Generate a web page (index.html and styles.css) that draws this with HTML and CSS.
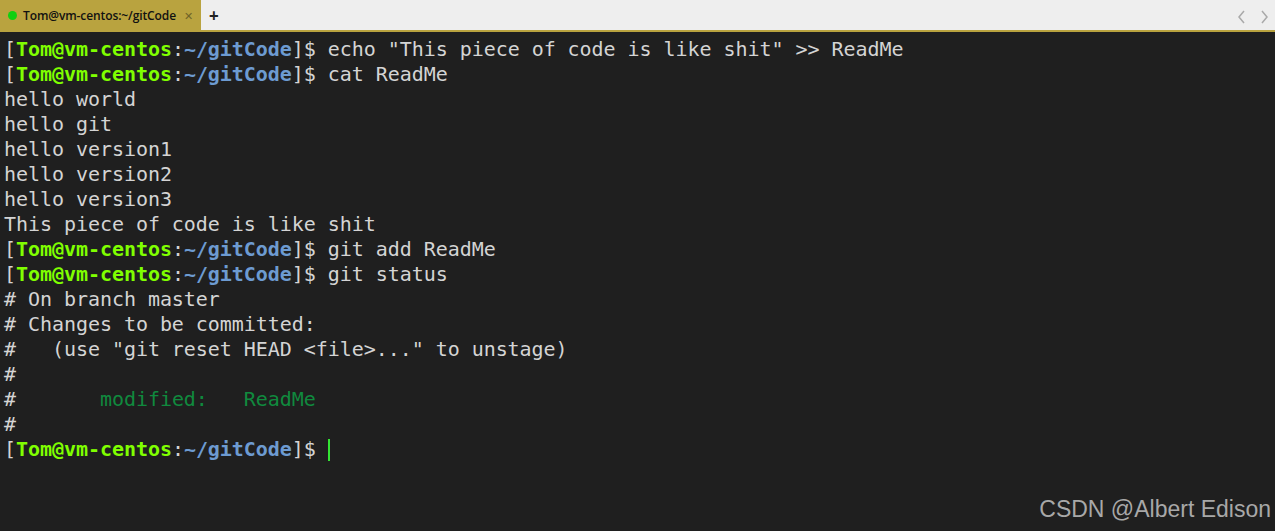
FILE: index.html
```html
<!DOCTYPE html>
<html>
<head>
<meta charset="utf-8">
<link rel="stylesheet" href="styles.css">
</head>
<body>
<div class="tabbar">
  <div class="tab">
    <span class="dot"></span>
    <span class="tab-title">Tom@vm-centos:~/gitCode</span>
    <span class="tab-close">✕</span>
  </div>
  <div class="tab-add">+</div>
  <div class="spacer"></div>
  <div class="nav">
    <svg width="10" height="14" viewBox="0 0 10 14"><path d="M7 1 L2 7 L7 13" fill="none" stroke="#a9a9a9" stroke-width="1.5"/></svg>
    <svg width="10" height="14" viewBox="0 0 10 14"><path d="M3 1 L8 7 L3 13" fill="none" stroke="#a9a9a9" stroke-width="1.5"/></svg>
  </div>
</div>
<div class="term">
<div class="line"><span class="br">[</span><span class="user">Tom@vm-centos</span><span class="br">:</span><span class="path">~/gitCode</span><span class="br">]$ </span>echo "This piece of code is like shit" &gt;&gt; ReadMe</div>
<div class="line"><span class="br">[</span><span class="user">Tom@vm-centos</span><span class="br">:</span><span class="path">~/gitCode</span><span class="br">]$ </span>cat ReadMe</div>
<div class="line">hello world</div>
<div class="line">hello git</div>
<div class="line">hello version1</div>
<div class="line">hello version2</div>
<div class="line">hello version3</div>
<div class="line">This piece of code is like shit</div>
<div class="line"><span class="br">[</span><span class="user">Tom@vm-centos</span><span class="br">:</span><span class="path">~/gitCode</span><span class="br">]$ </span>git add ReadMe</div>
<div class="line"><span class="br">[</span><span class="user">Tom@vm-centos</span><span class="br">:</span><span class="path">~/gitCode</span><span class="br">]$ </span>git status</div>
<div class="line"># On branch master</div>
<div class="line"># Changes to be committed:</div>
<div class="line">#   (use "git reset HEAD &lt;file&gt;..." to unstage)</div>
<div class="line">#</div>
<div class="line">#       <span class="mod">modified:   ReadMe</span></div>
<div class="line">#</div>
<div class="line"><span class="br">[</span><span class="user">Tom@vm-centos</span><span class="br">:</span><span class="path">~/gitCode</span><span class="br">]$ </span><span class="cursor"></span></div>
</div>
<div class="watermark">CSDN @Albert Edison</div>
</body>
</html>
```
FILE: styles.css
```css
html, body {
  margin: 0;
  padding: 0;
  background: #1f1f1f;
  height: 100%;
  overflow: hidden;
}
body {
  position: relative;
}
.tabbar {
  display: flex;
  align-items: stretch;
  height: 30px;
  background: #eeeeee;
  border-bottom: 2px solid #b9a33f;
  font-family: "Open Sans", "Liberation Sans", sans-serif;
}
.tab {
  display: flex;
  align-items: center;
  width: 201px;
  box-sizing: border-box;
  background: #b9a33f;
  padding-left: 8px;
}
.dot {
  width: 9px;
  height: 9px;
  border-radius: 50%;
  background: #10d010;
  margin-right: 6px;
}
.tab-title {
  font-size: 12px;
  font-weight: 600;
  color: #111;
  letter-spacing: -0.1px;
}
.tab-close {
  font-size: 11px;
  color: #6f6428;
  margin-left: 8px;
}
.tab-add {
  display: flex;
  align-items: center;
  padding-left: 8px;
  font-size: 17px;
  font-weight: 700;
  color: #222;
}
.spacer { flex: 1; }
.nav {
  display: flex;
  align-items: center;
  gap: 12px;
  padding-right: 6px;
  padding-top: 3px;
}
.term {
  padding: 5px 0 0 4px;
  font-family: "DejaVu Sans Mono", "Liberation Mono", monospace;
  font-size: 20px;
  letter-spacing: -0.05px;
  line-height: 25px;
  color: #d4d4d4;
}
.line { height: 25px; white-space: pre; }
.br { color: #d4d4d4; font-weight: normal; }
.user { color: #80ff00; font-weight: bold; }
.path { color: #6d9bd1; font-weight: bold; }
.mod { color: #108a3e; }
.cursor {
  display: inline-block;
  width: 2px;
  height: 22px;
  background: #33e433;
  vertical-align: -5px;
  margin-left: 0;
}
.watermark {
  position: absolute;
  right: 4px;
  bottom: 8px;
  font-family: "Liberation Sans", Arial, sans-serif;
  font-size: 23px;
  color: #a8a8a8;
}
```
